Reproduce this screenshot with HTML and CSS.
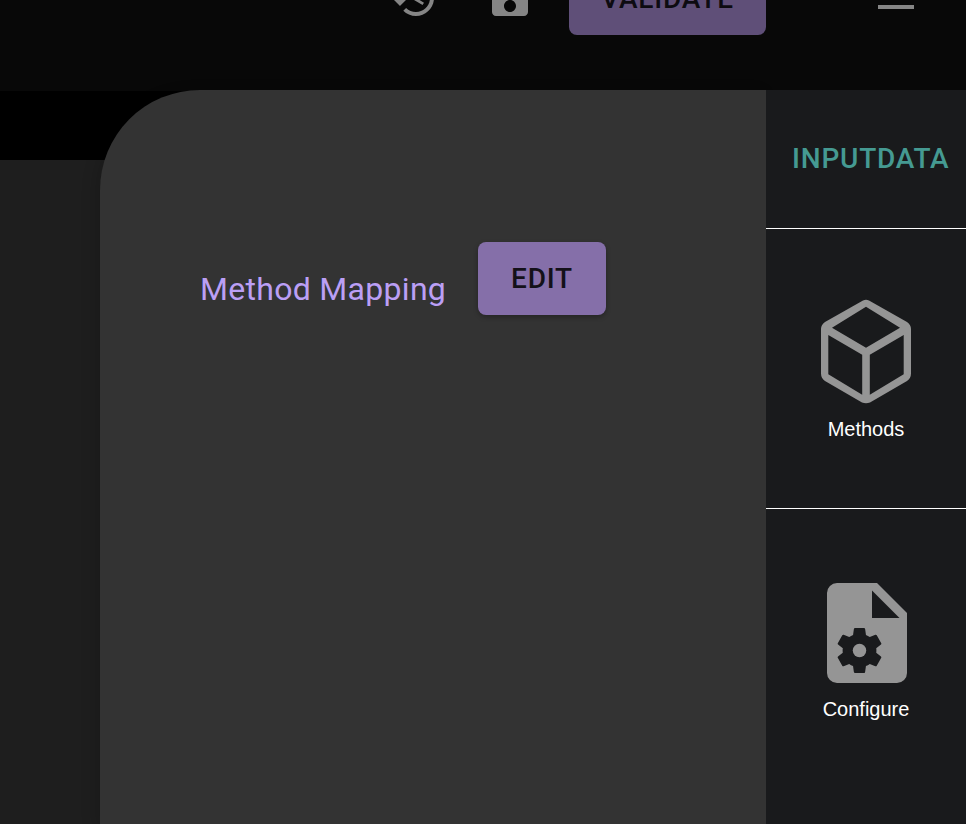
FILE: index.html
```html
<!DOCTYPE html>
<html lang="en">
<head>
<meta charset="utf-8">
<title>Method Mapping</title>
<link rel="stylesheet" href="styles.css">
</head>
<body>
<header class="toolbar">
  <svg class="tool history" viewBox="0 0 24 24"><path d="M13 3c-4.97 0-9 4.03-9 9H1l3.89 3.89.07.14L9 12H6c0-3.87 3.13-7 7-7s7 3.13 7 7-3.13 7-7 7c-1.93 0-3.68-.79-4.94-2.06l-1.42 1.42C8.27 19.99 10.51 21 13 21c4.97 0 9-4.03 9-9s-4.03-9-9-9zm-1 5v5l4.28 2.54.72-1.21-3.5-2.08V8H12z"/></svg>
  <svg class="tool save" viewBox="0 0 24 24"><path d="M17 3H5c-1.11 0-2 .9-2 2v14c0 1.1.89 2 2 2h14c1.1 0 2-.9 2-2V7l-4-4zm-5 16c-1.66 0-3-1.34-3-3s1.34-3 3-3 3 1.34 3 3-1.34 3-3 3zm3-10H5V5h10v4z"/></svg>
  <button class="button validate">VALIDATE</button>
  <svg class="tool menu" viewBox="0 0 24 24"><path d="M3 18h18v-2H3v2zm0-5h18v-2H3v2zm0-7v2h18V6H3z"/></svg>
</header>
<main class="workspace">
  <section class="drawer">
    <div class="mapping">
      <h1 class="title">Method Mapping</h1>
      <button class="button edit">EDIT</button>
    </div>
  </section>
  <nav class="sidebar">
    <div class="heading">INPUTDATA</div>
    <a class="entry">
      <svg class="entry-icon" viewBox="0 0 120 120"><path fill-rule="evenodd" d="M57 7.400Q60 6 63 7.400L101 29Q105 32 105 36V80.500Q105 85 101 88L64 109.500Q60 111 56 109.500L19 88Q15 85 15 80.500V36Q15 32 19 29zM60 13.800 26 34.700 60 54.700 94 34.700zM22.300 42V81.200L56.200 101.800V61.700zM97.700 42 63.800 61.700V101.800L97.700 81.200z"/></svg>
      <span class="label">Methods</span>
    </a>
    <a class="entry">
      <svg class="entry-icon" viewBox="-.2 0 24 24"><path fill-rule="evenodd" d="M14 2H6a2 2 0 0 0-2 2v16a2 2 0 0 0 2 2h12a2 2 0 0 0 2-2V8zM13 3.500 18.500 9H13z"/><path class="cutout" transform="translate(10.500 15.500) scale(.469) translate(-12 -12)" d="M19.140 12.940c.04-.3.06-.61.06-.94 0-.32-.02-.64-.07-.94l2.030-1.580c.18-.14.23-.41.12-.61l-1.920-3.320c-.12-.22-.37-.29-.59-.22l-2.390.96c-.5-.38-1.030-.7-1.620-.94l-.36-2.540c-.04-.24-.24-.41-.48-.41h-3.840c-.24 0-.43.17-.47.41l-.36 2.540c-.59.24-1.130.57-1.620.94l-2.390-.96c-.22-.08-.47 0-.59.22L2.740 8.870c-.12.21-.08.47.12.61l2.030 1.580c-.05.3-.09.63-.09.94s.02.64.07.94l-2.030 1.580c-.18.14-.23.41-.12.61l1.920 3.320c.12.22.37.29.59.22l2.390-.96c.5.38 1.030.7 1.620.94l.36 2.540c.05.24.24.41.48.41h3.840c.24 0 .44-.17.47-.41l.36-2.540c.59-.24 1.130-.56 1.620-.94l2.390.96c.22.08.47 0 .59-.22l1.920-3.320c.12-.22.07-.47-.12-.61z"/><circle cx="10.500" cy="15.500" r="1.350"/></svg>
      <span class="label">Configure</span>
    </a>
  </nav>
</main>
</body>
</html>
```
FILE: styles.css
```css
* { box-sizing: border-box; }
body {
  margin: 0;
  height: 824px;
  overflow: hidden;
  font-family: Roboto, sans-serif;
  background: linear-gradient(#080808 91px, #000 91px, #000 160px, #1e1e1e 160px);
}
.toolbar {
  display: flex;
  align-items: flex-start;
  height: 90px;
  padding-left: 390px;
  overflow: hidden;
}
.tool {
  width: 48px;
  height: 48px;
  margin-top: -26px;
  flex: none;
  fill: #858585;
}
.save { margin-left: 48px; }
.menu { margin: -27px 0 0 106px; }
.button {
  flex: none;
  height: 73px;
  padding: 0;
  border: 0;
  border-radius: 8px;
  font: 500 28px/73px Roboto, sans-serif;
  letter-spacing: .8px;
  color: #141119;
}
.validate {
  width: 197px;
  margin: -38px 0 0 35px;
  background: #5f4f78;
  color: #0d0b11;
}
.workspace {
  display: flex;
  height: 734px;
  padding-left: 100px;
}
.drawer {
  flex: 1;
  padding: 152px 0 0 100px;
  border-top-left-radius: 100px;
  background: #333;
  box-shadow: -4px 4px 16px rgba(0, 0, 0, .16);
}
.mapping {
  display: flex;
  align-items: flex-start;
}
.title {
  width: 278px;
  margin: 28px 0 0;
  font-size: 32px;
  font-weight: 400;
  line-height: 38px;
  letter-spacing: .3px;
  white-space: nowrap;
  color: #bb9ff5;
}
.edit {
  width: 128px;
  background: #856fa9;
  box-shadow: 0 2px 5px rgba(0, 0, 0, .3);
}
.sidebar {
  width: 200px;
  background: #191a1c;
}
.heading {
  height: 138px;
  padding-left: 26px;
  font-size: 28px;
  font-weight: 500;
  line-height: 137px;
  letter-spacing: .8px;
  color: #459a92;
}
.entry {
  display: flex;
  flex-direction: column;
  align-items: center;
  height: 280px;
  padding-top: 64px;
  border-top: 1px solid #fff;
}
.entry-icon {
  width: 120px;
  height: 120px;
  fill: #959595;
}
.cutout { fill: #191a1c; }
.label {
  margin-top: 4px;
  font: 20px/24px "Liberation Sans", sans-serif;
  color: #fff;
}
```
